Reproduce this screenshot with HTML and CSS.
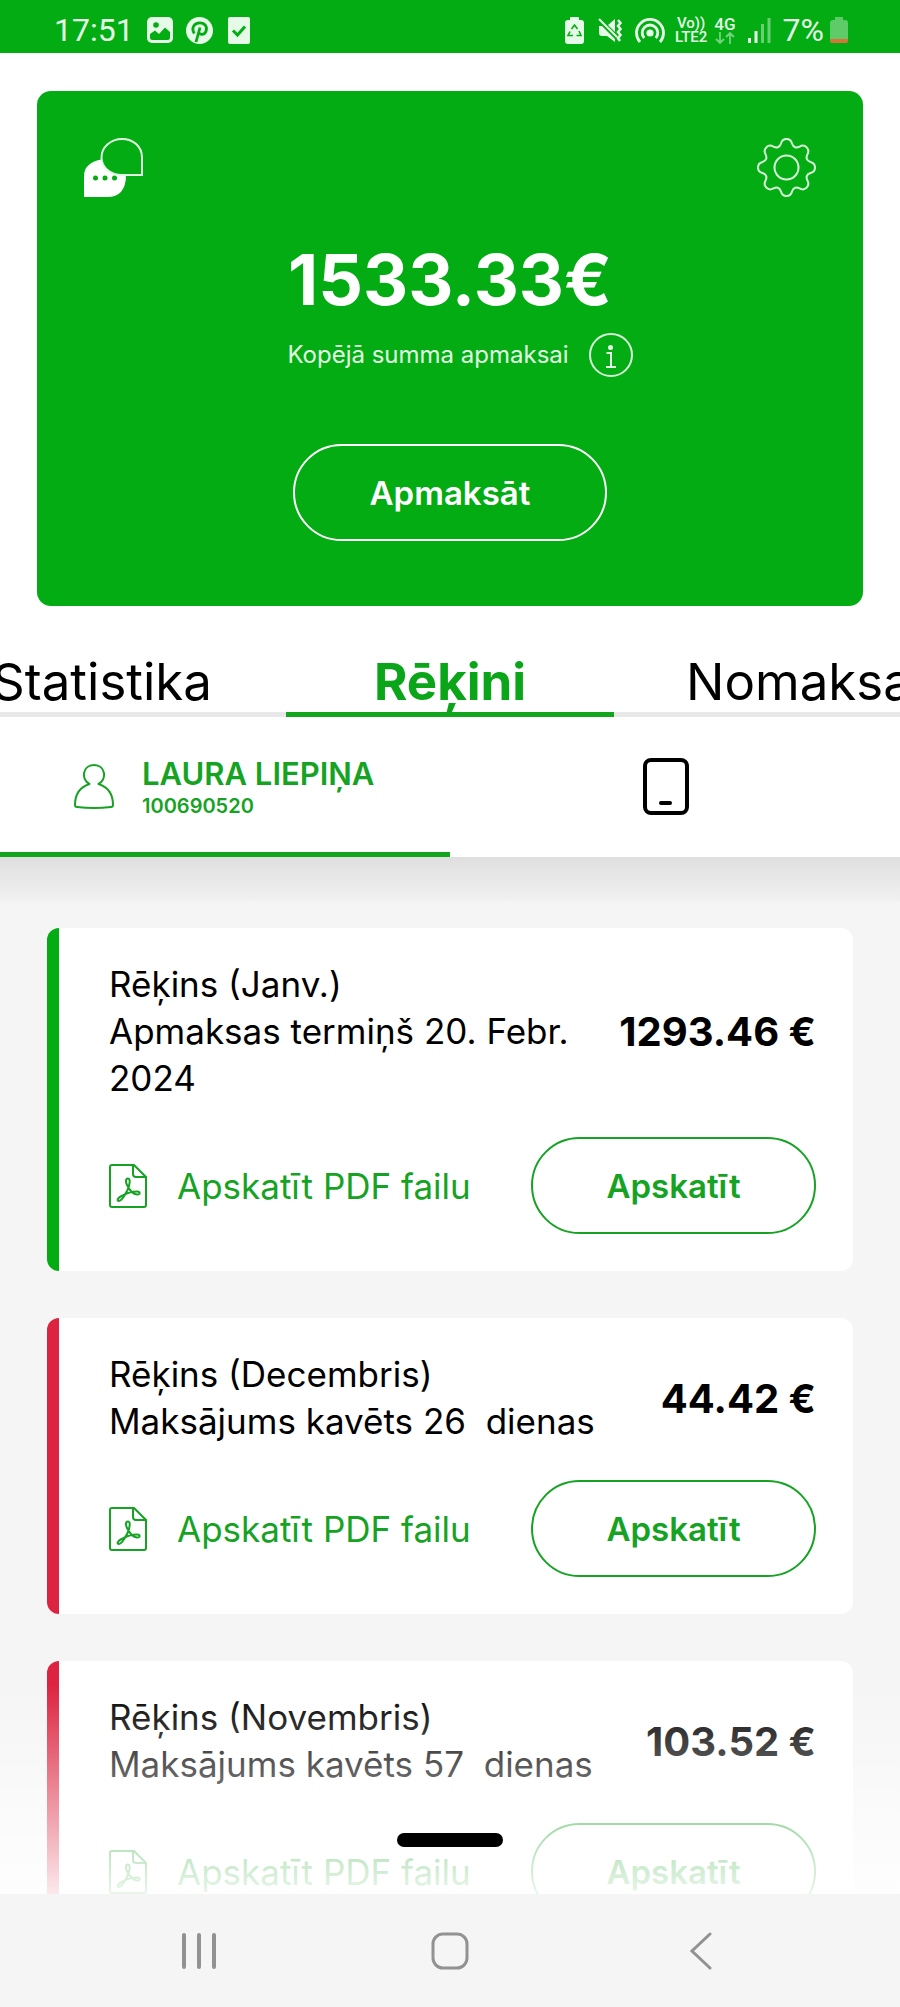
FILE: index.html
```html
<!DOCTYPE html>
<html lang="lv">
<head>
<meta charset="utf-8">
<meta name="viewport" content="width=device-width, initial-scale=1">
<title>Rēķini</title>
<link rel="stylesheet" href="styles.css">
</head>
<body>
<svg class="sprite" aria-hidden="true">
  <symbol id="pdf" viewBox="0 0 38 44">
    <g fill="none" stroke="currentColor" stroke-width="2" stroke-linejoin="round" stroke-linecap="round">
      <path d="M3 1H25L37 13V41Q37 43 35 43H3Q1 43 1 41V3Q1 1 3 1Z"/>
      <path d="M24 1V10Q24 13 27 13H37"/>
      <path d="M19 14.500C16.500 14.500 16.500 18 18 21C20 25 24 30 28 30.500C31.500 31 31.500 27.500 28 27.500C23 27.500 17 29.500 12.500 32C8.500 34 7.500 37 10 37C13 37 16 31 18.500 26C20.500 21.500 22 14.500 19 14.500Z"/>
    </g>
  </symbol>
</svg>
<div class="app">
  <div class="status">
    <div class="status-group">
      <span class="clock">17:51</span>
      <svg class="s-img" width="26" height="26" viewBox="0 0 26 26"><rect width="26" height="26" rx="5" fill="currentColor"/><circle cx="9" cy="8" r="2.800" class="cut"/><path class="cut" d="M3 17L8 13.500L12 17L18 10.500L23 15V20.500Q23 23 20.500 23H5.500Q3 23 3 20.500Z"/></svg>
      <svg class="s-pin" width="27" height="27" viewBox="0 0 27 27"><circle cx="13.500" cy="13.500" r="13.500" fill="currentColor"/><path class="cut-line" stroke-width="2.800" d="M8.300 16.500C5 11 8 5.800 13.800 5.800C19 5.800 21.600 10 20 14.200C18.600 18 14.500 18.300 12.800 15.800M14 10.500L10 25"/></svg>
      <svg width="22" height="27" viewBox="0 0 22 27"><rect width="22" height="27" rx="2" fill="currentColor"/><path class="cut-line" stroke-width="3" d="M5 13.500L9.500 18L17 9.500"/></svg>
    </div>
    <div class="status-group">
      <svg class="s-recycle" width="19" height="27" viewBox="0 0 19 27"><path fill="currentColor" d="M5 3V1Q5 0 6 0H13Q14 0 14 1V3H16Q19 3 19 6V24Q19 27 16 27H3Q0 27 0 24V6Q0 3 3 3Z"/><path class="cut-line" stroke-width="1.600" d="M6.500 12L9.500 8L12.500 12M14 14L16 18.500H11.500M8 18.500H3L5 14.500"/></svg>
      <svg class="s-mute" width="26" height="25" viewBox="0 0 26 25"><path fill="currentColor" d="M1 8H4L17 21V24L9 18H4Q1 18 1 15ZM10 7L17 1V14Z"/><path d="M1 1L19 19" stroke="currentColor" stroke-width="2"/><path d="M20 2L22.500 5L20 8L22.500 11L20 14L22.500 17L20 20L22 23" fill="none" stroke="currentColor" stroke-width="2.500"/></svg>
      <svg class="s-hotspot" width="30" height="27" viewBox="0 0 30 27"><g fill="none" stroke="currentColor" stroke-width="2.800"><path d="M5 25A13.500 13.500 0 1 1 25 25"/><path d="M9.200 21A7.800 7.800 0 1 1 20.800 21"/></g><circle cx="15" cy="16" r="3.600" fill="currentColor"/></svg>
      <span class="volte"><span>Vo))</span><span>LTE2</span></span>
      <span class="net"><span>4G</span><svg width="20" height="12" viewBox="0 0 20 12"><path d="M5 0V11M1 7L5 11L9 7M15 12V1M11 5L15 1L19 5" fill="none" stroke="currentColor" stroke-width="1.800" opacity=".5"/></svg></span>
      <svg class="s-signal" width="23" height="25" viewBox="0 0 23 25"><g fill="currentColor"><rect y="20" width="3" height="5"/><rect x="6.500" y="13" width="3" height="12"/><g opacity=".45"><rect x="13" y="6" width="3" height="19"/><rect x="19.500" width="3" height="25"/></g></g></svg>
      <span class="clock">7%</span>
      <svg width="18" height="26" viewBox="0 0 18 26"><path fill="currentColor" opacity=".4" d="M5 3V0H13V3H15Q18 3 18 6V22H0V6Q0 3 3 3Z"/><path fill="#d8743a" d="M0 22H18V24Q18 26 16 26H2Q0 26 0 24Z"/></svg>
    </div>
  </div>

  <section class="summary">
    <div class="summary-top">
      <button class="icon-btn" type="button" aria-label="Čats">
        <svg width="59" height="59" viewBox="0 0 59 59"><path fill="#fff" d="M0 59V38Q0 25 17 21.500Q23 36 42 37Q42 59 23 59Z"/><path fill="#03ac13" stroke="#e0fbe2" stroke-width="2" d="M58 37H37.500C26 37 17.500 29 17.500 19.500C17.500 9 27 1 38 1C49 1 58 8 58 19.500Z"/><g class="cut"><circle cx="11.500" cy="40" r="2.500"/><circle cx="21" cy="40" r="2.500"/><circle cx="30.500" cy="40" r="2.500"/></g></svg>
      </button>
      <button class="icon-btn" type="button" aria-label="Iestatījumi">
        <svg width="59" height="59" viewBox="-29.500 -29.500 59 59"><g fill="none" stroke="#d9fadb" stroke-width="2"><circle r="12"/><path d="M-5.500 -24C-4 -30 4 -30 5.500 -24C7 -19.500 10 -19.500 13.100 -20.900C18.400 -24 24 -18.400 20.900 -13.100C19.500 -10 19.500 -7 24 -5.500C30 -4 30 4 24 5.500C19.500 7 19.500 10 20.900 13.100C24 18.400 18.400 24 13.100 20.900C10 19.500 7 19.500 5.500 24C4 30 -4 30 -5.500 24C-7 19.500 -10 19.500 -13.100 20.900C-18.400 24 -24 18.400 -20.900 13.100C-19.500 10 -19.500 7 -24 5.500C-30 4 -30 -4 -24 -5.500C-19.500 -7 -19.500 -10 -20.900 -13.100C-24 -18.400 -18.400 -24 -13.100 -20.900C-10 -19.500 -7 -19.500 -5.500 -24Z"/></g></svg>
      </button>
    </div>
    <div class="total">1533.33€</div>
    <div class="caption">
      <span>Kopējā summa apmaksai</span>
      <button class="icon-btn" type="button" aria-label="Informācija">
        <svg width="44" height="44" viewBox="0 0 44 44"><circle cx="22" cy="22" r="21" fill="none" stroke="#d9fadb" stroke-width="2"/><circle cx="21.500" cy="14.500" r="2.500" fill="#e6fbe7"/><path d="M17.500 20H22V34M17 34H27" fill="none" stroke="#e6fbe7" stroke-width="2"/></svg>
      </button>
    </div>
    <button class="pill pay" type="button">Apmaksāt</button>
  </section>

  <nav class="tabs">
    <a class="tab before" href="#statistika">Statistika</a>
    <a class="tab active" href="#rekini" aria-current="page">Rēķini</a>
    <a class="tab after" href="#nomaksa">Nomaksa</a>
  </nav>

  <div class="accounts">
    <button class="account selected" type="button">
      <svg width="40" height="45" viewBox="0 0 40 45"><path d="M15.500 20C7 16 8 1 20 1C32 1 33 16 24.500 20C34 23 39 30 39 41Q39 43 37 43Q20 45 3 43Q1 43 1 41C1 30 6 23 15.500 20Z" fill="none" stroke="currentColor" stroke-width="2" stroke-linejoin="round"/></svg>
      <span class="account-text"><span class="name">LAURA LIEPIŅA</span><span class="number">100690520</span></span>
    </button>
    <button class="account device" type="button" aria-label="Ierīce">
      <svg width="46" height="57" viewBox="0 0 46 57"><rect x="2" y="2" width="42" height="53" rx="6" fill="none" stroke="#000" stroke-width="4"/><path d="M18 45H27" stroke="#000" stroke-width="4" stroke-linecap="round"/></svg>
    </button>
  </div>

  <main class="bills">
    <article class="bill">
      <div class="bill-top">
        <div class="bill-text"><div>Rēķins (Janv.)</div><div>Apmaksas termiņš 20. Febr. 2024</div></div>
        <div class="amount">1293.46 €</div>
      </div>
      <div class="bill-actions">
        <a class="pdf" href="#pdf-janv"><svg width="38" height="44"><use href="#pdf"/></svg><span>Apskatīt PDF failu</span></a>
        <button class="pill view" type="button">Apskatīt</button>
      </div>
    </article>
    <article class="bill late">
      <div class="bill-top">
        <div class="bill-text"><div>Rēķins (Decembris)</div><div>Maksājums kavēts 26&nbsp; dienas</div></div>
        <div class="amount">44.42 €</div>
      </div>
      <div class="bill-actions">
        <a class="pdf" href="#pdf-dec"><svg width="38" height="44"><use href="#pdf"/></svg><span>Apskatīt PDF failu</span></a>
        <button class="pill view" type="button">Apskatīt</button>
      </div>
    </article>
    <article class="bill late">
      <div class="bill-top">
        <div class="bill-text"><div>Rēķins (Novembris)</div><div>Maksājums kavēts 57&nbsp; dienas</div></div>
        <div class="amount">103.52 €</div>
      </div>
      <div class="bill-actions">
        <a class="pdf" href="#pdf-nov"><svg width="38" height="44"><use href="#pdf"/></svg><span>Apskatīt PDF failu</span></a>
        <button class="pill view" type="button">Apskatīt</button>
      </div>
    </article>
    <div class="fade"><span class="handle"></span></div>
  </main>

  <nav class="system-nav" aria-label="Sistēma">
    <button class="icon-btn" type="button" aria-label="Pēdējās lietotnes"><svg width="36" height="36" viewBox="0 0 36 36"><path d="M3 2V34M18 2V34M33 2V34" stroke="#929292" stroke-width="4" stroke-linecap="round"/></svg></button>
    <button class="icon-btn" type="button" aria-label="Sākums"><svg width="38" height="38" viewBox="0 0 38 38"><rect x="2" y="2" width="34" height="34" rx="10" fill="none" stroke="#929292" stroke-width="3"/></svg></button>
    <button class="icon-btn" type="button" aria-label="Atpakaļ"><svg width="22" height="38" viewBox="0 0 22 38"><path d="M20 2L2 19L20 36" fill="none" stroke="#929292" stroke-width="3" stroke-linecap="round"/></svg></button>
  </nav>
</div>
</body>
</html>
```
FILE: styles.css
```css
:root {
  --green: #03ac13;
  --link: #16a324;
  --red: #dc233f;
  --grey: #f5f5f5;
}

* { box-sizing: border-box; }

body {
  margin: 0;
  background: #fff;
  color: #000;
  font-family: Inter, "Open Sans", sans-serif;
}

button {
  margin: 0;
  padding: 0;
  border: 0;
  background: none;
  color: inherit;
  font-family: inherit;
}

a { color: inherit; text-decoration: none; }
svg { display: block; flex: none; }

.sprite { position: absolute; width: 0; height: 0; }

.app {
  display: flex;
  flex-direction: column;
  height: 100vh;
  overflow: hidden;
}

/* Status bar */
.status {
  display: flex;
  flex: none;
  justify-content: space-between;
  padding: 7px 52px 0 54px;
  height: 53px;
  background: var(--green);
  color: #e6fbe7;
  font-family: Roboto, sans-serif;
}
.status-group { display: flex; align-items: center; }
.clock { font-size: 32px; line-height: 46px; }
.cut { fill: var(--green); }
.cut-line { fill: none; stroke: var(--green); }
.status .s-img { margin-left: 13px; }
.status .s-pin { margin: 0 15px 0 13px; }
.s-mute { margin-left: 14px; }
.s-hotspot { margin: 0 10px 0 11px; }
.volte, .net {
  display: flex;
  flex-direction: column;
  align-items: center;
  font-size: 15px;
  font-weight: 500;
  line-height: 14px;
}
.net { margin: 0 12px 0 7px; gap: 1px; font-size: 17px; }
.s-signal { margin-right: 12px; }
.s-signal + .clock { margin-right: 6px; }

/* Summary card */
.summary {
  display: flex;
  flex: none;
  flex-direction: column;
  align-items: center;
  margin: 38px 37px 0;
  padding: 47px 47px 65px;
  border-radius: 14px;
  background: var(--green);
  color: #fff;
}
.summary-top { display: flex; justify-content: space-between; width: 100%; }
.total { margin-top: 38px; font-size: 70px; font-weight: 700; line-height: 90px; }
.caption {
  display: flex;
  align-items: center;
  gap: 20px;
  margin: 8px 0 67px 20px;
  color: #e0fbe2;
  font-size: 24px;
  line-height: 44px;
}
.pill {
  border: 2px solid currentColor;
  border-radius: 49px;
  height: 97px;
  font-weight: 600;
}
.pay { width: 314px; font-size: 33px; }

/* Section tabs */
.tabs {
  display: grid;
  flex: none;
  grid-template-columns: minmax(0, 1fr) 328px minmax(0, 1fr);
  margin-top: 46px;
  overflow: hidden;
}
.tab {
  display: flex;
  justify-content: center;
  border-bottom: 5px solid #e8e8e8;
  font-size: 51px;
  line-height: 60px;
}
.tab.before { justify-content: flex-end; padding-right: 74px; }
.tab.after { justify-content: flex-start; padding-left: 72px; }
.tab.active { border-color: #12a61f; color: #0aa518; font-weight: 700; }

/* Accounts */
.accounts { display: flex; flex: none; }
.account {
  display: flex;
  align-items: center;
  gap: 28px;
  width: 50%;
  height: 140px;
  padding: 4px 0 0 74px;
  border-bottom: 5px solid transparent;
  text-align: left;
}
.account.selected { border-color: #12a61f; color: var(--link); }
.account.device { padding-left: 193px; }
.account-text { display: flex; flex-direction: column; padding-top: 4px; font-weight: 600; }
.name { font-size: 31px; line-height: 34px; }
.number { font-size: 20px; line-height: 30px; }

/* Bills */
.bills {
  position: relative;
  display: flex;
  flex: 1;
  flex-direction: column;
  gap: 47px;
  min-height: 0;
  padding: 71px 47px 0;
  overflow: hidden;
  background: linear-gradient(#dfdfdf, #f0f0f0 42px, var(--grey) 46px);
}
.bill {
  flex: none;
  padding: 33px 37px 37px 50px;
  border-left: 12px solid var(--green);
  border-radius: 12px;
  background: #fff;
}
.bill.late { border-color: var(--red); }
.bill-top, .bill-actions, .pdf { display: flex; align-items: center; }
.bill-top, .bill-actions { justify-content: space-between; }
.bill-actions { margin-top: 35px; color: var(--link); }
.bill-text { font-size: 35px; line-height: 47px; }
.amount { flex: none; padding-left: 16px; font-size: 40px; font-weight: 700; }
.pdf { gap: 30px; font-size: 35px; }
.view { width: 285px; font-size: 33px; }

.fade {
  position: absolute;
  right: 0;
  bottom: 0;
  left: 0;
  display: flex;
  align-items: flex-end;
  justify-content: center;
  height: 210px;
  padding-bottom: 47px;
  background: linear-gradient(rgba(255, 255, 255, 0), rgba(255, 255, 255, .9));
}
.handle { width: 106px; height: 14px; border-radius: 7px; background: #000; }

/* System navigation */
.system-nav {
  display: grid;
  flex: none;
  grid-template-columns: repeat(3, 1fr);
  align-items: center;
  justify-items: center;
  height: 113px;
  padding: 0 73px;
  background: var(--grey);
}
```
